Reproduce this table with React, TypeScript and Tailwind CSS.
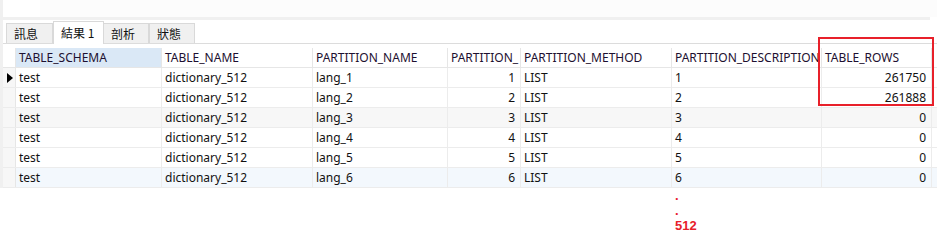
import React from 'react';

const columns = [
  { key: 'schema', label: 'TABLE_SCHEMA', align: 'left' },
  { key: 'name', label: 'TABLE_NAME', align: 'left' },
  { key: 'partition', label: 'PARTITION_NAME', align: 'left' },
  { key: 'ordinal', label: 'PARTITION_', align: 'right' },
  { key: 'method', label: 'PARTITION_METHOD', align: 'left' },
  { key: 'desc', label: 'PARTITION_DESCRIPTION', align: 'left' },
  { key: 'rows', label: 'TABLE_ROWS', align: 'right' },
] as const;

type Row = Record<(typeof columns)[number]['key'], string>;

const rows: Row[] = [1, 2, 3, 4, 5, 6].map((n) => ({
  schema: 'test',
  name: 'dictionary_512',
  partition: `lang_${n}`,
  ordinal: String(n),
  method: 'LIST',
  desc: String(n),
  rows: n === 1 ? '261750' : n === 2 ? '261888' : '0',
}));

const tabs = ['訊息', '結果 1', '剖析', '狀態'];

const rowBg = (i: number) => {
  if (i === 2) return 'bg-[#f7f7f7]';
  if (i === 5) return 'bg-[#f3f8fd]';
  return 'bg-white';
};

const gridCols = 'grid grid-cols-[13px_146px_151px_135px_73px_151px_150px_110px]';

export default function App() {
  return (
    <div className="relative w-[937px] h-[240px] bg-white overflow-hidden font-['Noto_Sans','Noto_Sans_CJK_TC',sans-serif] text-[12px] text-[#111]">
      {/* top strip */}
      <div className="flex h-[17px]">
        <div className="w-[3px] bg-[#f0f0f0]" />
        <div className="w-[37px] bg-white" />
        <div className="flex-1 bg-[#fcfcfc]" />
      </div>
      <div className="h-[3px] w-[930px] bg-[#f0f0f0]" />

      <div className="flex">
        <div className="w-[3px] h-[168px] bg-[#f0f0f0] shrink-0" />
        <div className="flex-1">
          {/* tabs */}
          <div className="flex items-end h-[24px] pl-[3px] border-b border-[#dcdcdc]">
            {tabs.map((t, i) => (
              <div
                key={t}
                className={
                  i === 1
                    ? "h-[23px] -mb-px w-[51px] bg-white border border-b-0 border-[#d9d9d9] flex items-center pl-[7px] pb-[1px] font-['Noto_Sans_CJK_TC',sans-serif]"
                    : `h-[20px] w-[46px] bg-[#f0f0f0] border border-b-0 border-[#d9d9d9] flex items-center pl-[7px] font-['Noto_Sans_CJK_TC',sans-serif] ${i === 0 ? 'w-[47px]' : ''} ${i === 2 ? '-ml-px' : ''}`
                }
              >
                {t}
              </div>
            ))}
          </div>

          {/* grid */}
          <div className="mt-[4px]">
            <div className={`${gridCols} h-[20px] border-b border-[#e6e6e6]`}>
              <div className="bg-white border-r border-[#e6e6e6]" />
              {columns.map((c, i) => (
                <div
                  key={c.key}
                  className={`pl-[3px] flex items-center overflow-hidden whitespace-nowrap border-r border-[#e6e6e6] text-[#1d1030] ${
                    i === 0 ? 'bg-[#dae8f6]' : 'bg-white'
                  }`}
                >
                  {c.label}
                </div>
              ))}
            </div>
            {rows.map((r, ri) => (
              <div key={ri} className={`${gridCols} h-[20px] border-b border-[#ececec] ${rowBg(ri)}`}>
                <div className="bg-[#f7f7f7] border-r border-[#e6e6e6] flex items-center pl-[4px]">
                  {ri === 0 && (
                    <svg width="6" height="10" viewBox="0 0 6 10">
                      <polygon points="0,0 6,5 0,10" fill="#000" />
                    </svg>
                  )}
                </div>
                {columns.map((c) => (
                  <div
                    key={c.key}
                    className={`flex items-center overflow-hidden whitespace-nowrap border-r border-[#ececec] ${
                      c.align === 'right' ? 'justify-end pr-[5px]' : 'pl-[3px]'
                    }`}
                  >
                    {r[c.key]}
                  </div>
                ))}
              </div>
            ))}
          </div>
        </div>
      </div>

      {/* annotation below description column */}
      <div className={`${gridCols} ml-[3px]`}>
        <div className="col-start-7 pl-[3px] font-['Liberation_Sans',sans-serif] text-[13px] font-bold leading-[15px] text-[#e8202a]">
          <div>.</div>
          <div>.</div>
          <div>512</div>
        </div>
      </div>

      {/* highlight box around TABLE_ROWS */}
      <div className="absolute left-[818px] top-[37px] w-[116px] h-[69px] border-2 border-[#e8202a] pointer-events-none" />
    </div>
  );
}
